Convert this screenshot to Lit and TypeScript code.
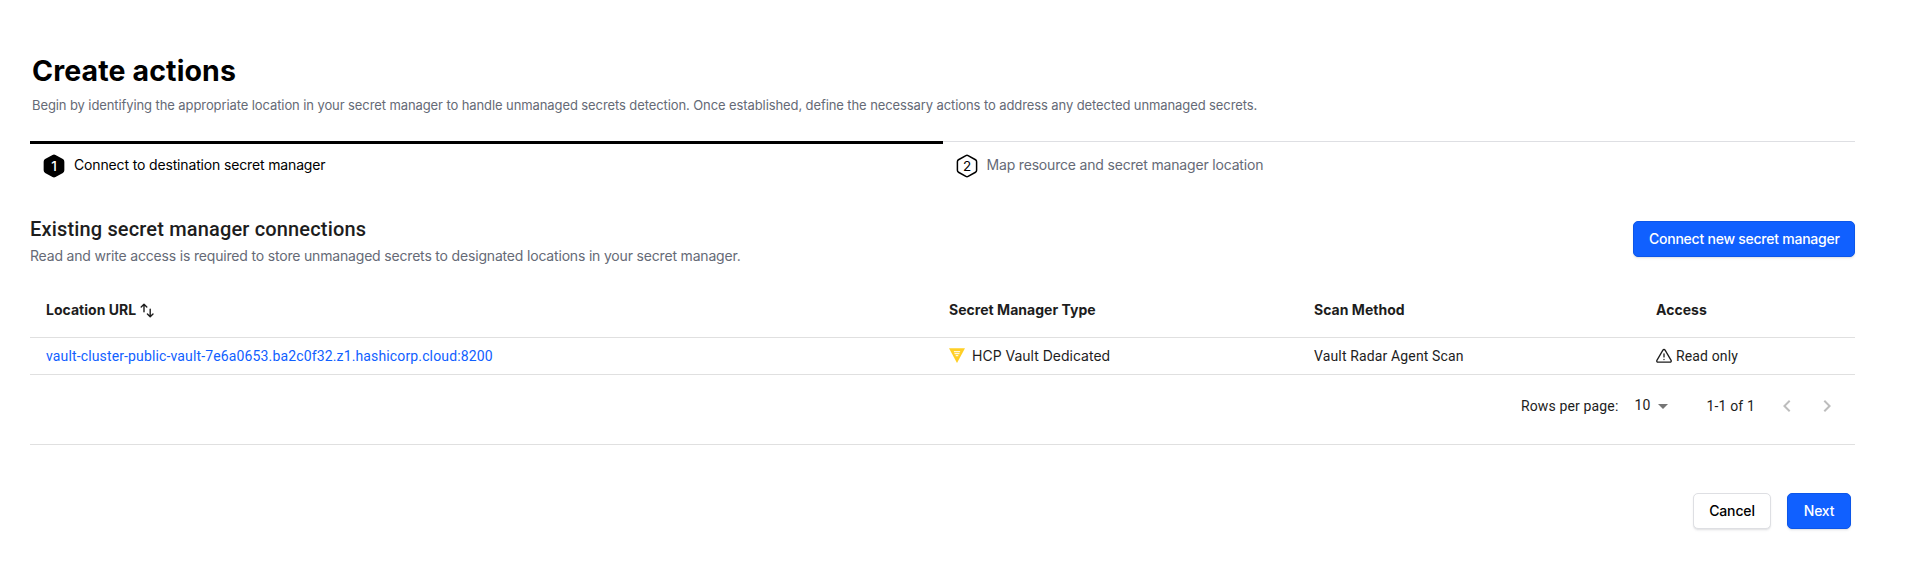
import { LitElement, html, svg, css } from "lit";
import { customElement } from "lit/decorators.js";
import { classMap } from "lit/directives/class-map.js";

interface Step {
  label: string;
  active: boolean;
}

interface Connection {
  url: string;
  type: string;
  method: string;
  access: string;
}

const STEPS: Step[] = [
  { label: "Connect to destination secret manager", active: true },
  { label: "Map resource and secret manager location", active: false },
];

const CONNECTIONS: Connection[] = [
  {
    url: "vault-cluster-public-vault-7e6a0653.ba2c0f32.z1.hashicorp.cloud:8200",
    type: "HCP Vault Dedicated",
    method: "Vault Radar Agent Scan",
    access: "Read only",
  },
];

const hexagon = (n: number, active: boolean) => svg`
  <svg class="hex" width="24" height="24" viewBox="0 0 24 24">
    <path d="M10.9 1.55a2.2 2.2 0 0 1 2.2 0l7.4 4.2a2.2 2.2 0 0 1 1.1 1.9v8.7a2.2 2.2 0 0 1-1.1 1.9l-7.4 4.2a2.2 2.2 0 0 1-2.2 0l-7.4-4.2a2.2 2.2 0 0 1-1.1-1.9V7.65a2.2 2.2 0 0 1 1.1-1.9z"
      fill=${active ? "#000" : "#fff"} stroke="#000" stroke-width="1.5"/>
    <text x="12" y="16.6" text-anchor="middle" font-size="13.5" font-weight=${active ? 500 : 400}
      fill=${active ? "#fff" : "#000"}>${n}</text>
  </svg>`;

const sortIcon = svg`
  <svg width="16" height="16" viewBox="0 0 16 16" fill="none" stroke="#1d1d1d" stroke-width="1.4"
    stroke-linecap="round" stroke-linejoin="round">
    <path d="M2.2 5 5 2.2 7.8 5M5 2.4V9.8M8.4 12l2.8 2.8L14 12M11.2 14.6V7.2"/>
  </svg>`;

const vaultIcon = svg`
  <svg width="16" height="16" viewBox="0 0 16 16">
    <path d="M0 .3h16L8 15z" fill="#ffcf25"/>
    <path d="M4.9 3.6h6.2M5.5 5.6h5M6.7 7.6h2.6" stroke="#fff" stroke-width="1.1" opacity=".85"/>
  </svg>`;

const alertIcon = svg`
  <svg width="16" height="16" viewBox="0 0 16 16" fill="none" stroke="#1d1d1d" stroke-width="1.3"
    stroke-linecap="round" stroke-linejoin="round">
    <path d="M6.9 2.1a1.3 1.3 0 0 1 2.2 0l6 10.2a1.3 1.3 0 0 1-1.1 1.9H2a1.3 1.3 0 0 1-1.1-1.9zM8 5.8v3.1M8 11.4v.1"/>
  </svg>`;

const chevron = (d: string) => svg`
  <svg width="24" height="24" viewBox="0 0 24 24" fill="#bdbdbd"><path d=${d}/></svg>`;

@customElement("app-root")
export class AppRoot extends LitElement {
  static styles = css`
    :host {
      display: block;
      box-sizing: border-box;
      height: 579px;
      padding: 53px 52px 0 30px;
      background: #fff;
      color: #1d1d1d;
      font: 400 14px/20px Inter, sans-serif;
    }
    h1, h2, p { margin: 0; }
    h1 {
      padding-left: 2px;
      color: #000;
      font: 700 28.5px/36px Inter, sans-serif;
      letter-spacing: 0.12px;
    }
    .intro {
      padding: 6px 0 1px 2px;
      color: #656a76;
      font-size: 13px;
      letter-spacing: -0.095px;
    }
    .steps { display: flex; margin-top: 25px; }
    .step {
      flex: 1;
      display: flex;
      align-items: center;
      gap: 8px;
      height: 47px;
      box-sizing: border-box;
      padding: 1px 0 0 12px;
      border-top: 1px solid #dedfe3;
      color: #656a76;
      letter-spacing: -0.18px;
    }
    .step.active {
      padding: 0 0 1px 12px;
      border-top: 3px solid #000;
      color: #000;
      letter-spacing: -0.15px;
    }
    .label { padding-bottom: 1px; }
    .hex { font-family: Inter, sans-serif; letter-spacing: 0; }
    .head {
      display: flex;
      justify-content: space-between;
      align-items: flex-start;
      margin-top: 27px;
      height: 68px;
    }
    h2 {
      font: 500 20px/28px Roboto, sans-serif;
      letter-spacing: 0.16px;
    }
    .sub { padding-top: 3px; color: #656a76; letter-spacing: -0.18px; }
    .head .btn { margin-top: 6px; }
    .btn {
      box-sizing: border-box;
      height: 36px;
      padding: 0 15px;
      border: 1px solid #0c56e9;
      border-radius: 5px;
      background: #1060ff;
      color: #fff;
      font: 500 14px/20px Inter, sans-serif;
      letter-spacing: -0.24px;
      white-space: nowrap;
      box-shadow: 0 1px 1px rgba(101, 106, 118, 0.1), 0 2px 2px rgba(101, 106, 118, 0.08);
    }
    .btn.plain {
      width: 78px;
      border-color: #dedfe3;
      background: #fff;
      color: #000;
      letter-spacing: -0.15px;
    }
    .wide { width: 222px; }
    .next { width: 64px; }
    .row {
      display: grid;
      grid-template-columns: 903px 365px 342px 1fr;
      align-items: center;
      padding-left: 16px;
      height: 36px;
      border-bottom: 1px solid #e0e0e0;
      font-family: Roboto, sans-serif;
      letter-spacing: 0.14px;
    }
    .row.header {
      height: 54px;
      font: 700 14px/20px Inter, sans-serif;
      letter-spacing: 0.03px;
    }
    .cell { display: flex; align-items: center; }
    .header .cell { gap: 3px; }
    .type { gap: 7px; font-family: Inter, sans-serif; letter-spacing: 0; }
    .access { gap: 4px; }
    .link { color: #1060ff; text-decoration: none; }
    .pager {
      display: flex;
      align-items: center;
      justify-content: flex-end;
      height: 62px;
      padding-right: 16px;
      font-family: Roboto, sans-serif;
      letter-spacing: 0.15px;
    }
    .size { display: flex; align-items: center; margin: 0 32px 0 16px; padding-bottom: 2px; }
    .size svg { margin-top: 2px; }
    .nav { display: flex; gap: 16px; margin-left: 20px; }
    .footer {
      display: flex;
      justify-content: flex-end;
      gap: 16px;
      margin-top: 7px;
      padding: 48px 4px 0 0;
      border-top: 1px solid #e0e0e0;
    }
    svg { flex: none; display: block; }
  `;

  render() {
    return html`
      <h1>Create actions</h1>
      <p class="intro">Begin by identifying the appropriate location in your secret manager to handle unmanaged secrets detection. Once established, define the necessary actions to address any detected unmanaged secrets.</p>
      <div class="steps">
        ${STEPS.map(
          (s, i) => html`<div class=${classMap({ step: true, active: s.active })}>
            ${hexagon(i + 1, s.active)}<span class="label">${s.label}</span>
          </div>`
        )}
      </div>
      <div class="head">
        <div>
          <h2>Existing secret manager connections</h2>
          <p class="sub">Read and write access is required to store unmanaged secrets to designated locations in your secret manager.</p>
        </div>
        <button class="btn wide">Connect new secret manager</button>
      </div>
      <div class="row header">
        <div class="cell">Location URL ${sortIcon}</div>
        <div class="cell">Secret Manager Type</div>
        <div class="cell">Scan Method</div>
        <div class="cell">Access</div>
      </div>
      ${CONNECTIONS.map(
        (c) => html`<div class="row">
          <div class="cell"><a class="link">${c.url}</a></div>
          <div class="cell type">${vaultIcon}<span>${c.type}</span></div>
          <div class="cell">${c.method}</div>
          <div class="cell access">${alertIcon}<span>${c.access}</span></div>
        </div>`
      )}
      <div class="pager">
        <span>Rows per page:</span>
        <span class="size">10
          <svg width="24" height="24" viewBox="0 0 24 24" fill="#757575"><path d="M7 10l5 5 5-5z"/></svg>
        </span>
        <span>1-1 of 1</span>
        <span class="nav">
          ${chevron("M15.41 7.41 14 6l-6 6 6 6 1.41-1.41L10.83 12z")}
          ${chevron("M10 6 8.59 7.41 13.17 12l-4.58 4.59L10 18l6-6z")}
        </span>
      </div>
      <div class="footer">
        <button class="btn plain">Cancel</button>
        <button class="btn next">Next</button>
      </div>
    `;
  }
}
